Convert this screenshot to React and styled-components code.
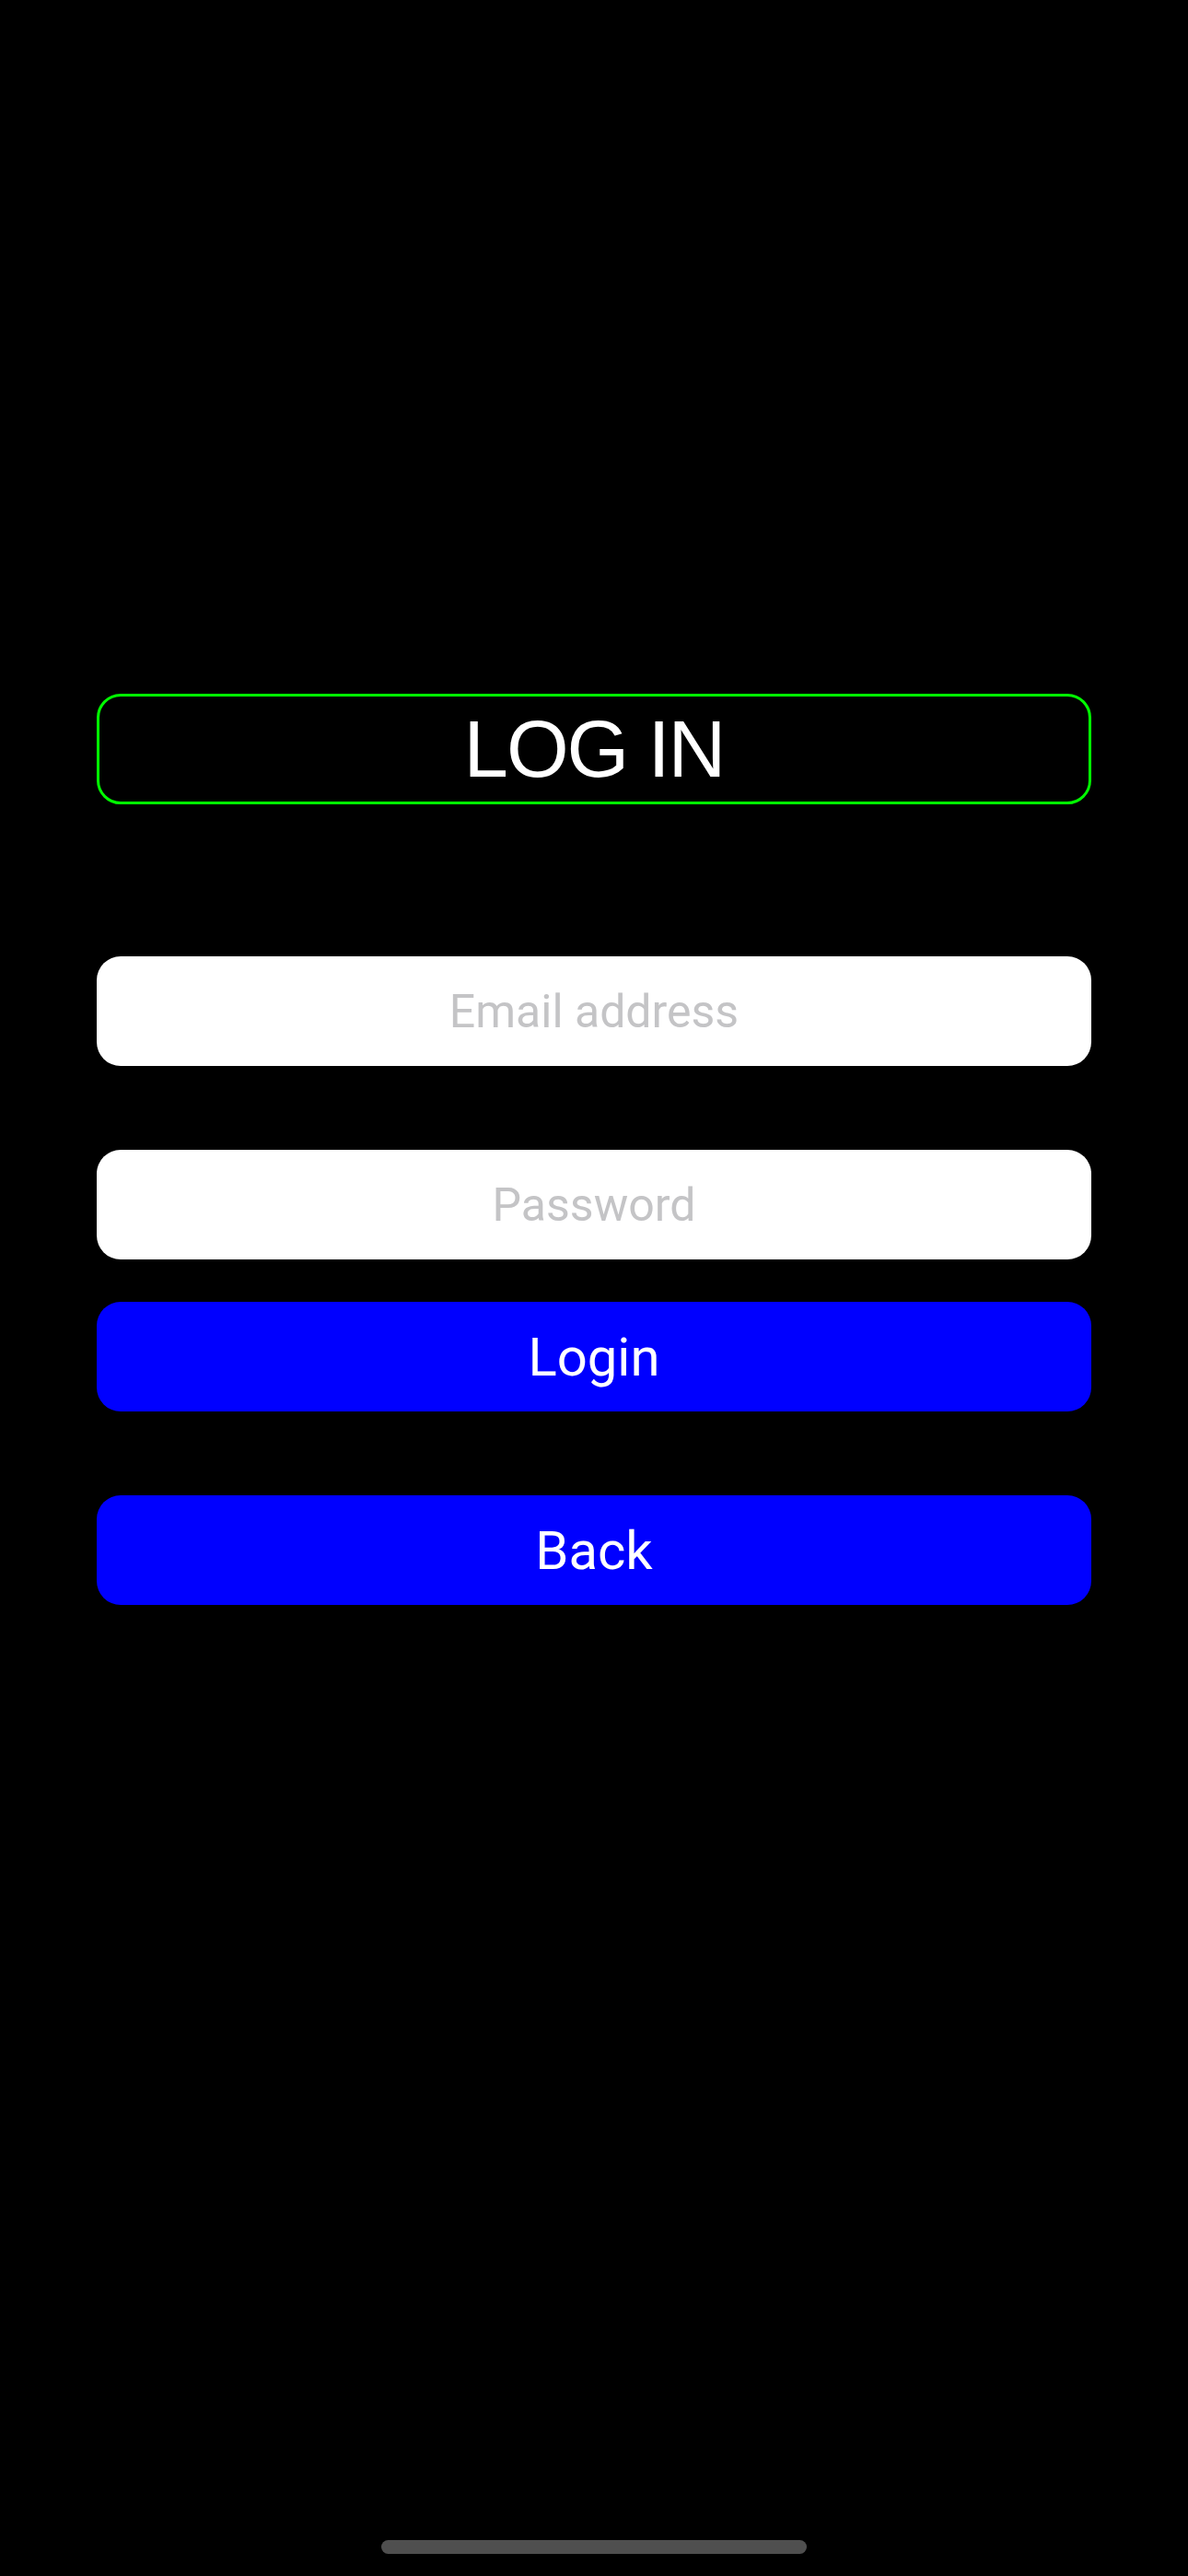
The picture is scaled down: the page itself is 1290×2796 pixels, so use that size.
import React from 'react';
import styled, { createGlobalStyle } from 'styled-components';

const GlobalStyle = createGlobalStyle`
    html, body {
        margin: 0;
        padding: 0;
        background: #000;
    }
`

const Screen = styled.div`
    width: 1290px;
    height: 2796px;
    background: #000;
    display: flex;
    flex-direction: column;
    align-items: center;
    box-sizing: border-box;
    padding-top: 753px;
    font-family: Roboto, "Noto Sans", sans-serif;
`
const Form = styled.div`
    width: 1080px;
    display: flex;
    flex-direction: column;
`
const Title = styled.div`
    height: 120px;
    box-sizing: border-box;
    border: 3px solid #00ff00;
    border-radius: 26px;
    display: flex;
    align-items: center;
    justify-content: center;
    color: #fff;
    font-family: "Liberation Sans", Arial, sans-serif;
    font-size: 87px;
    letter-spacing: -2px;
    margin-bottom: 165px;
`
const Input = styled.input`
    height: 119px;
    box-sizing: border-box;
    border: none;
    outline: none;
    border-radius: 26px;
    background: #fff;
    text-align: center;
    font-family: Roboto, "Noto Sans", sans-serif;
    font-size: 50px;
    color: #000;
    margin-bottom: ${p => p.$gap}px;
    padding: 0;
    &::placeholder {
        color: #c4c4c6;
    }
`
const Button = styled.button`
    height: 119px;
    border: none;
    border-radius: 26px;
    background: #0000ff;
    color: #fff;
    font-family: Roboto, "Noto Sans", sans-serif;
    font-size: 58px;
    margin-bottom: ${p => p.$gap}px;
    padding: 0;
    cursor: pointer;
`
const Spacer = styled.div`
    flex: 1;
`
const HomeIndicator = styled.div`
    width: 462px;
    height: 15px;
    border-radius: 8px;
    background: #4f4f4f;
    margin-bottom: 24px;
`

const App = () => {
    return (
        <Screen>
            <GlobalStyle />
            <Form>
                <Title>LOG IN</Title>
                <Input placeholder="Email address" $gap={91} />
                <Input type="password" placeholder="Password" $gap={46} />
                <Button $gap={91}>Login</Button>
                <Button $gap={0}>Back</Button>
            </Form>
            <Spacer />
            <HomeIndicator />
        </Screen>
    );
};

export default App;
